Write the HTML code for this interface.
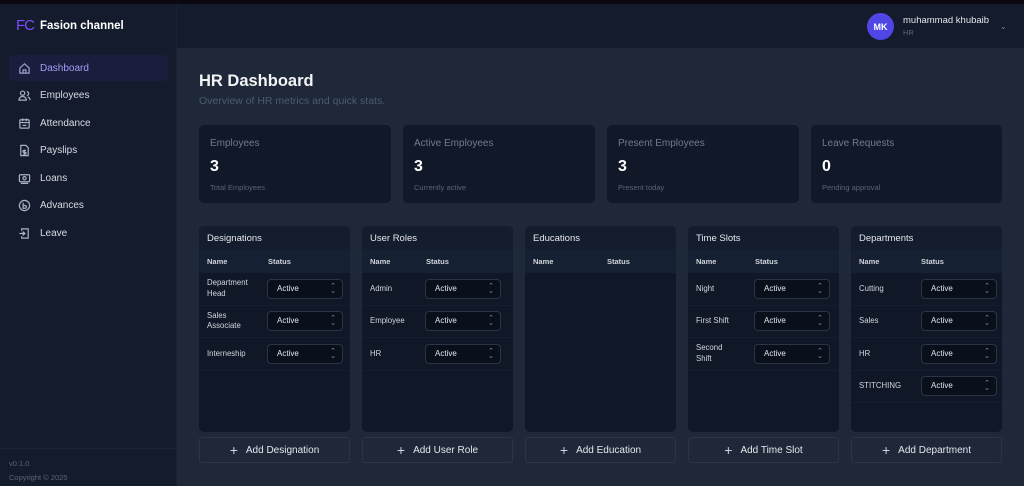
<!DOCTYPE html>
<html><head><meta charset="utf-8"><style>
*{box-sizing:border-box;margin:0;padding:0}
body{width:1024px;height:486px;overflow:hidden;background:#0b0812;font-family:"Liberation Sans",sans-serif;position:relative}
.side{position:absolute;left:0;top:4px;width:176px;height:482px;background:#131b2c}
.logo{position:absolute;left:16px;top:13px;display:flex;align-items:center;gap:6px;color:#fff;font-weight:bold;font-size:11.5px}
.logo b{color:#7c4dff;font-size:15px;font-weight:normal;letter-spacing:-1px}
.nav{position:absolute;top:51px;left:9px;width:159px}
.nav div{height:26px;margin-bottom:1.5px;display:flex;align-items:center;padding-left:9px;color:#d7dbe3;font-size:10px;gap:9px;border-radius:4px}
.nav div.act{background:#1b1d3d;color:#a39bf5}
.nav svg{width:13px;height:13px;stroke:#aab2c0;fill:none;stroke-width:1.3}
.nav .act svg{stroke:#9aa0c8}
.foot{position:absolute;left:0;top:444px;width:176px;border-top:1px solid #1c2536;padding:8px 0 0 9px;color:#5b6475;font-size:7.5px;line-height:14px}
.head{position:absolute;left:176px;top:4px;right:0;height:44px;background:#131b2c;border-left:1px solid #182133}
.av{position:absolute;left:690px;top:9px;width:27px;height:27px;border-radius:50%;background:#4f46e5;color:#fff;font-weight:bold;font-size:9px;display:flex;align-items:center;justify-content:center}
.un{position:absolute;left:726px;top:11px;color:#e5e7eb;font-size:9.5px}
.ur{position:absolute;left:726px;top:24px;color:#5b6475;font-size:7.5px}
.chev{position:absolute;left:823px;top:18px;color:#7b8494;font-size:8px}
.main{position:absolute;left:176px;top:48px;right:0;bottom:0;background:#1e2839;border-left:1px solid #182133}
h1{position:absolute;left:199px;top:72px;color:#f3f4f6;font-size:16.5px;font-weight:bold}
.sub{position:absolute;left:199px;top:95px;color:#4e5a6e;font-size:10.5px}
.stat{position:absolute;top:125px;height:78px;background:#111827;border-radius:5px;padding:13px 11px}
.stat .l{color:#6f7b8f;font-size:10px}
.stat .n{color:#fff;font-size:16px;font-weight:bold;margin-top:9px}
.stat .s{color:#5b6475;font-size:7.5px;margin-top:7px}
.card{position:absolute;top:226px;width:151px;height:206px;background:#101828;border-radius:5px;overflow:hidden}
.card .t{height:24px;background:#141d2e;color:#e5e7eb;font-size:9.5px;padding:7px 0 0 8px}
.card .th{height:23px;background:#162033;display:flex;align-items:center;font-size:7.5px;font-weight:bold;color:#d1d5db}
.th span:first-child{width:69px;padding-left:8px}
.row{height:32.5px;display:flex;align-items:center;border-bottom:1px solid #151e2e;color:#d1d5db;font-size:7.8px;line-height:10.5px}
.row span{width:68px;padding-left:8px;padding-right:10px}
.sel{width:76px;height:20px;background:#0a0f1c;border:1px solid #2a3445;border-radius:4px;color:#e5e7eb;font-size:8px;display:flex;align-items:center;justify-content:space-between;padding:0 6px 0 9px}
.sel i{font-style:normal;color:#8a93a3;font-size:7px;line-height:5px;text-align:center}
.btn{position:absolute;top:437px;width:151px;height:26px;border:1px solid #2b3546;border-radius:3px;background:#1e2839;color:#e5e7eb;font-size:10px;display:flex;align-items:center;justify-content:center;gap:8px}
.btn b{font-weight:normal;font-size:14px;color:#cfd3da}
</style></head><body>
<div class="side">
<div class="logo"><b>FC</b>Fasion channel</div>
<div class="nav">
<div class="act"><svg viewBox="0 0 14 14"><path d="M2 6.5L7 2l5 4.5V12H2z M5.5 12V8.5h3V12"/></svg>Dashboard</div>
<div><svg viewBox="0 0 14 14"><circle cx="5" cy="4.5" r="2.3"/><path d="M1 12c0-2.5 2-4 4-4s4 1.5 4 4z M9.5 3a2 2 0 010 4 M10.5 8.5c1.5.5 2.5 1.8 2.5 3.5"/></svg>Employees</div>
<div><svg viewBox="0 0 14 14"><rect x="2" y="3" width="10" height="9" rx="1"/><path d="M2 6h10 M5 1.5v3 M9 1.5v3 M5 9h4"/></svg>Attendance</div>
<div><svg viewBox="0 0 14 14"><path d="M3 1.5h5.5l2.5 2.5v8.5H3z M7 6v5 M8.5 7H6.3a1 1 0 000 2h1.4a1 1 0 010 2H5.5"/></svg>Payslips</div>
<div><svg viewBox="0 0 14 14"><rect x="1.5" y="3" width="11" height="7.5" rx="1"/><circle cx="7" cy="6.7" r="1.7"/><path d="M3 12.3h8"/></svg>Loans</div>
<div><svg viewBox="0 0 14 14"><circle cx="7" cy="7" r="5.5"/><path d="M5.5 4v6h2a1.5 1.5 0 000-3h-2"/></svg>Advances</div>
<div><svg viewBox="0 0 14 14"><path d="M4 4V2h7v10H4v-2 M1.5 7h6 M5 5l2.5 2L5 9"/></svg>Leave</div>
</div>
<div class="foot">v0.1.0<br>Copyright © 2025</div>
</div>
<div class="head">
<div class="av">MK</div><div class="un">muhammad khubaib</div><div class="ur">HR</div><div class="chev">⌄</div>
</div>
<div class="main"></div>
<h1>HR Dashboard</h1>
<div class="sub">Overview of HR metrics and quick stats.</div>
<div class="stat" style="left:199px;width:192px"><div class="l">Employees</div><div class="n">3</div><div class="s">Total Employees</div></div>
<div class="stat" style="left:403px;width:192px"><div class="l">Active Employees</div><div class="n">3</div><div class="s">Currently active</div></div>
<div class="stat" style="left:607px;width:192px"><div class="l">Present Employees</div><div class="n">3</div><div class="s">Present today</div></div>
<div class="stat" style="left:811px;width:191px"><div class="l">Leave Requests</div><div class="n">0</div><div class="s">Pending approval</div></div>

<div class="card" style="left:199px"><div class="t">Designations</div><div class="th"><span>Name</span><span>Status</span></div>
<div class="row"><span>Department Head</span><div class="sel">Active<i>⌃<br>⌄</i></div></div>
<div class="row"><span>Sales Associate</span><div class="sel">Active<i>⌃<br>⌄</i></div></div>
<div class="row"><span>Interneship</span><div class="sel">Active<i>⌃<br>⌄</i></div></div></div>
<div class="card" style="left:362px"><div class="t">User Roles</div><div class="th"><span style="width:64px">Name</span><span>Status</span></div>
<div class="row"><span style="width:63px">Admin</span><div class="sel">Active<i>⌃<br>⌄</i></div></div>
<div class="row"><span style="width:63px">Employee</span><div class="sel">Active<i>⌃<br>⌄</i></div></div>
<div class="row"><span style="width:63px">HR</span><div class="sel">Active<i>⌃<br>⌄</i></div></div></div>
<div class="card" style="left:525px"><div class="t">Educations</div><div class="th"><span style="width:82px">Name</span><span>Status</span></div></div>
<div class="card" style="left:688px"><div class="t">Time Slots</div><div class="th"><span style="width:67px">Name</span><span>Status</span></div>
<div class="row"><span style="width:66px">Night</span><div class="sel">Active<i>⌃<br>⌄</i></div></div>
<div class="row"><span style="width:66px">First Shift</span><div class="sel">Active<i>⌃<br>⌄</i></div></div>
<div class="row"><span style="width:66px;padding-right:22px">Second Shift</span><div class="sel">Active<i>⌃<br>⌄</i></div></div></div>
<div class="card" style="left:851px"><div class="t">Departments</div><div class="th"><span style="width:70px">Name</span><span>Status</span></div>
<div class="row"><span style="width:70px">Cutting</span><div class="sel">Active<i>⌃<br>⌄</i></div></div>
<div class="row"><span style="width:70px">Sales</span><div class="sel">Active<i>⌃<br>⌄</i></div></div>
<div class="row"><span style="width:70px">HR</span><div class="sel">Active<i>⌃<br>⌄</i></div></div>
<div class="row"><span style="width:70px">STITCHING</span><div class="sel">Active<i>⌃<br>⌄</i></div></div></div>

<div class="btn" style="left:199px"><b>+</b>Add Designation</div>
<div class="btn" style="left:362px"><b>+</b>Add User Role</div>
<div class="btn" style="left:525px"><b>+</b>Add Education</div>
<div class="btn" style="left:688px"><b>+</b>Add Time Slot</div>
<div class="btn" style="left:851px"><b>+</b>Add Department</div>
</body></html>
